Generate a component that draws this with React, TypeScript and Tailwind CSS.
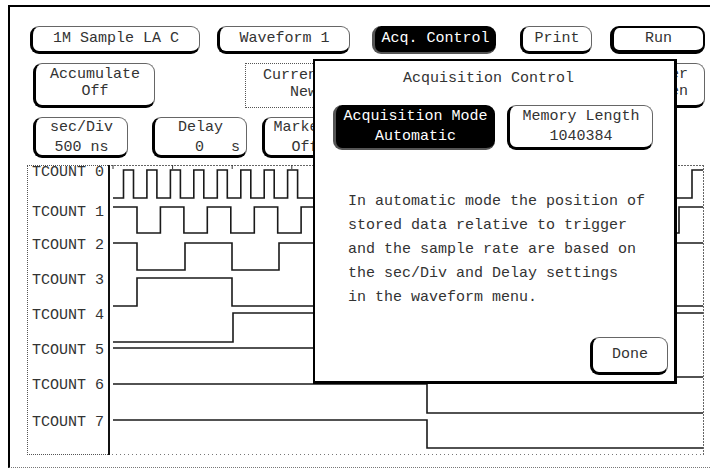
import React from "react";

function wavePath(hi: number, lo: number, startHigh: boolean, toggles: number[], x0 = 113, x1 = 703) {
  let high = startHigh;
  let d = `M${x0} ${high ? hi : lo}`;
  for (const t of toggles) {
    d += ` H${t.toFixed(1)} V${high ? lo : hi}`;
    high = !high;
  }
  d += ` H${x1}`;
  return d;
}

const t0: number[] = [];
for (let k = 0; k < 8; k++) {
  t0.push(123.5 + 23.45 * k, 133.5 + 23.45 * k);
}
t0.push(692);
const t1: number[] = [];
for (let k = 0; k < 8; k++) t1.push(137 + 23.45 * k);
t1.push(400, 679);

const signals = [
  wavePath(170, 198, false, t0),
  wavePath(207, 233, true, t1),
  wavePath(243, 270, true, [137, 185, 232, 279]),
  wavePath(278, 306, false, [137, 232]),
  wavePath(313, 342, false, [233]),
  wavePath(348, 377, true, [427]),
  wavePath(384, 413, true, [427]),
  wavePath(420, 448, true, [427]),
];

const ticks: number[] = [];
for (let x = 113; x < 704; x += 59.6) ticks.push(x);

const btn =
  "rounded-[9px] border border-[#666] border-l-[3px] border-b-[3px] border-l-black border-b-black bg-white text-[#333]";

const labels: [string, string][] = [
  ["TCOUNT 0", "mt-[-1px]"],
  ["TCOUNT 1", "mt-[24px]"],
  ["TCOUNT 2", "mt-[17px]"],
  ["TCOUNT 3", "mt-[19px]"],
  ["TCOUNT 4", "mt-[19px]"],
  ["TCOUNT 5", "mt-[19px]"],
  ["TCOUNT 6", "mt-[19px]"],
  ["TCOUNT 7", "mt-[21px]"],
];

export default function App() {
  return (
    <div className="relative w-[719px] h-[470px] overflow-hidden bg-white pt-[5px] pl-[8px] font-['Liberation_Mono',monospace] text-[15px] text-[#333]">
      <div className="w-[702px] h-[463px] border-l-2 border-t-2 border-black border-b border-b-[#777] border-dotted [border-left-style:solid] [border-top-style:solid]">
        {/* Row 1 */}
        <div className="flex mt-[19px] h-[28px]">
          <div className={`${btn} ml-[20px] w-[170px] flex items-center justify-center leading-[16px]`}>1M Sample LA C</div>
          <div className={`${btn} ml-[17px] w-[133px] flex items-center justify-center leading-[16px]`}>Waveform 1</div>
          <div className="ml-[22px] w-[124px] rounded-[9px] bg-black text-white flex items-center justify-center leading-[16px] border-l-[3px] border-b-[2px] border-[#555]">
            Acq. Control
          </div>
          <div className={`${btn} ml-[24px] w-[72px] flex items-center justify-center leading-[16px]`}>Print</div>
          <div className="ml-[18px] w-[95px] rounded-[9px] border-2 border-black border-l-[4px] border-b-[4px] flex items-center justify-center leading-[16px]">
            Run
          </div>
        </div>

        {/* Row 2 */}
        <div className="flex mt-[9px] h-[45px]">
          <div className={`${btn} ml-[23px] w-[122px] flex flex-col items-center pt-[2px] leading-[17px]`}>
            <span>Accumulate</span>
            <span>Off</span>
          </div>
          <div className="ml-[90px] w-[162px] border border-dotted border-[#555] flex flex-col items-center pt-[3px] leading-[17px]">
            <span>Current Sample</span>
            <span>New Data</span>
          </div>
          <div className={`${btn} ml-[178px] w-[120px] flex flex-col items-end pr-[16px] pt-[2px] leading-[17px]`}>
            <span>Trigger</span>
            <span>Screen</span>
          </div>
        </div>

        {/* Row 3 */}
        <div className="flex mt-[9px] h-[41px]">
          <div className={`${btn} ml-[23px] w-[95px] flex flex-col items-center leading-[20px]`}>
            <span>sec/Div</span>
            <span className="whitespace-pre">500 ns</span>
          </div>
          <div className={`${btn} ml-[24px] w-[95px] flex flex-col leading-[20px]`}>
            <span className="text-center">Delay</span>
            <span className="text-right pr-[6px] whitespace-pre">0   s</span>
          </div>
          <div className={`${btn} ml-[15px] w-[84px] flex flex-col items-center leading-[20px]`}>
            <span>Markers</span>
            <span>Off</span>
          </div>
        </div>

        {/* Waveform area */}
        <div className="flex mt-[7px] h-[290px]">
          <div className="ml-[17px] w-[81px] h-[290px] border-l border-t border-b border-dotted border-[#555] overflow-hidden flex flex-col pl-[4px] leading-[16px]">
            {labels.map(([t, c]) => (
              <div key={t} className={`${c} h-[16px] whitespace-pre`}>
                {t}
              </div>
            ))}
          </div>
          <svg width={596} height={290} className="block">
            <g transform="translate(-108,-165)">
              <line x1={108} y1={165.5} x2={704} y2={165.5} stroke="#666" strokeWidth={1} strokeDasharray="2 1" />
              <line x1={703.5} y1={165} x2={703.5} y2={455} stroke="#666" strokeWidth={1} strokeDasharray="2 1" />
              <line x1={108} y1={454.5} x2={704} y2={454.5} stroke="#777" strokeWidth={1} strokeDasharray="1 3" />
              <line x1={109} y1={165} x2={109} y2={455} stroke="#111" strokeWidth={2} />
              {ticks.map((x) => (
                <line key={x} x1={x} y1={165} x2={x} y2={169} stroke="#333" strokeWidth={1} />
              ))}
              {signals.map((d, i) => (
                <path key={i} d={d} fill="none" stroke="#1a1a1a" strokeWidth={1.6} />
              ))}
            </g>
          </svg>
        </div>
      </div>

      {/* Acquisition Control dialog */}
      <div className="absolute left-[313px] top-[59px] w-[364px] h-[325px] bg-white border-2 border-black border-r-[3px] border-b-[3px] flex flex-col">
        <div className="mt-[10px] pl-[88px] leading-[16px]">Acquisition Control</div>
        <div className="flex mt-[18px] h-[45px]">
          <div className="ml-[18px] w-[162px] rounded-[9px] bg-black text-white border-l-[3px] border-b-[2px] border-[#555] flex flex-col items-center justify-center leading-[20px]">
            <span>Acquisition Mode</span>
            <span>Automatic</span>
          </div>
          <div className={`${btn} ml-[12px] w-[146px] flex flex-col items-center justify-center leading-[20px]`}>
            <span>Memory Length</span>
            <span>1040384</span>
          </div>
        </div>
        <div className="mt-[40px] pl-[33px] leading-[24px] whitespace-pre">
          {"In automatic mode the position of\nstored data relative to trigger\nand the sample rate are based on\nthe sec/Div and Delay settings\nin the waveform menu."}
        </div>
        <div className="mt-[27px] ml-[275px] w-[78px] h-[38px] rounded-[9px] border border-[#666] border-l-[3px] border-b-[3px] border-l-black border-b-black flex items-center justify-center leading-[16px]">
          Done
        </div>
      </div>
    </div>
  );
}
